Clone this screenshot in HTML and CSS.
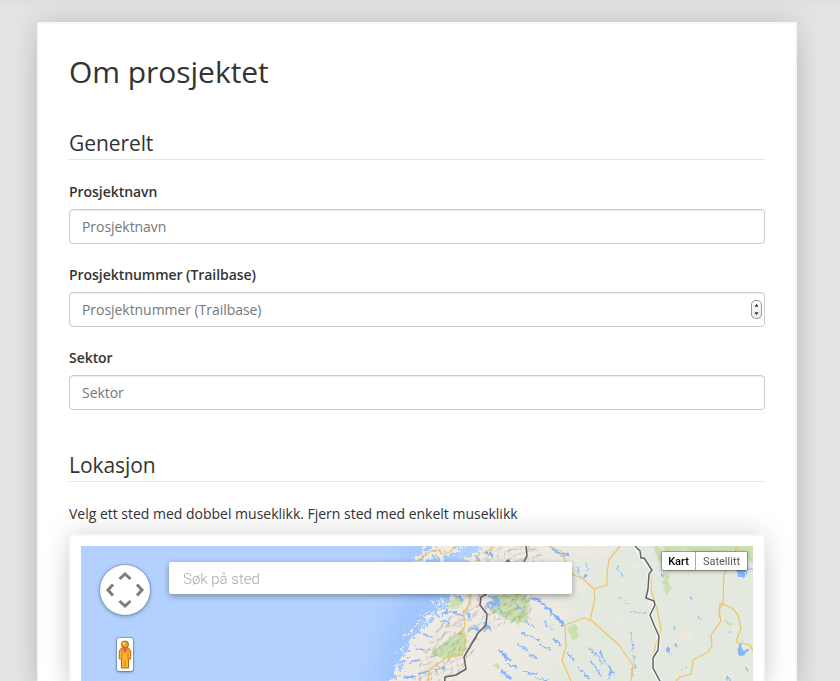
FILE: index.html
```html
<!DOCTYPE html>
<html lang="no">
<head>
<meta charset="utf-8">
<title>Om prosjektet</title>
<link rel="stylesheet" href="styles.css">
</head>
<body>
<main class="card">
  <h1>Om prosjektet</h1>
  <section>
    <h2>Generelt</h2>
    <div class="group"><label for="navn">Prosjektnavn</label><div class="field"><input id="navn" type="text" placeholder="Prosjektnavn"></div></div>
    <div class="group"><label for="nummer">Prosjektnummer (Trailbase)</label>
      <div class="field"><input id="nummer" type="text" placeholder="Prosjektnummer (Trailbase)">
        <span class="stepper"><svg width="11" height="19" viewBox="0 0 11 19"><path d="M3.5 6.7 5.5 3.7 7.5 6.7zM3.5 12.3 5.5 15.3 7.5 12.3z" fill="#333"/></svg></span>
      </div></div>
    <div class="group"><label for="sektor">Sektor</label><div class="field"><input id="sektor" type="text" placeholder="Sektor"></div></div>
  </section>
  <section class="location">
    <h2>Lokasjon</h2>
    <p>Velg ett sted med dobbel museklikk. Fjern sted med enkelt museklikk</p>
    <div class="frame">
      <div class="map">
        <svg class="terrain" width="672" height="135" viewBox="81 546 672 135">
          <defs>
            <linearGradient id="ground" gradientUnits="userSpaceOnUse" x1="490" y1="620" x2="570" y2="650"><stop offset="0" stop-color="#efebe4"/><stop offset=".5" stop-color="#ebeae2"/><stop offset="1" stop-color="#e4e9e0"/></linearGradient>
            <filter id="rough" x="-10%" y="-10%" width="120%" height="120%" color-interpolation-filters="sRGB"><feTurbulence type="fractalNoise" baseFrequency=".2" numOctaves="3" seed="4"/><feDisplacementMap in="SourceGraphic" scale="28" xChannelSelector="R" yChannelSelector="G"/></filter>
            <filter id="fine" x="-10%" y="-10%" width="120%" height="120%" color-interpolation-filters="sRGB"><feTurbulence type="fractalNoise" baseFrequency=".25" numOctaves="2" seed="9"/><feDisplacementMap in="SourceGraphic" scale="6" xChannelSelector="R" yChannelSelector="G"/></filter>
            <filter id="relief" x="0" y="0" width="100%" height="100%" color-interpolation-filters="sRGB"><feTurbulence type="fractalNoise" baseFrequency=".2" numOctaves="3" seed="7" result="n"/><feDiffuseLighting in="n" surfaceScale="2.2" diffuseConstant="1.15" lighting-color="#fffdf9" result="l"><feDistantLight azimuth="225" elevation="60"/></feDiffuseLighting><feComposite in="l" in2="SourceGraphic" operator="in"/></filter>
            <filter id="soft" filterUnits="userSpaceOnUse" x="250" y="480" width="400" height="300"><feGaussianBlur stdDeviation="14"/></filter>
          </defs>
          <path fill="#b3d1ff" d="M81 546h672v240H81z"/>
          <path d="M425 536 432 590 405 640 392 700" fill="none" stroke="#8ebafa" stroke-width="40" opacity=".55" filter="url(#soft)"/>
          <g filter="url(#rough)">
            <path fill="url(#ground)" d="M484 530 478 554 466 566 468 584 454 596 444 606 447 612 432 614 427 626 418 630 411 646 401 660 400 673 394 681 389 700H780V530z"/>
            <path fill="#efebe4" d="M411 565 421 555 432 547 450 542 464 545 451 555 436 557 420 565zM463 563 474 553 486 553 480 565z"/>
            <path fill="#efebe4" d="M404 634l5-1 2 3-4 2zM411 651l4 0-1 4-5 1zM430 602l3-1 1 4-4 1zM424 613l4 0 0 4-4 1zM400 650l4 0 1 3-4 1zM408 642l4-3 2 4-3 2zM438 604l4-1 0 3-4 1zM419 620l4-1 1 3-4 1zM397 664l4 0 0 3-4 0zM391 675l4-1 1 4-4 0z"/>
          </g>
          <g fill="#cbdfaf" filter="url(#fine)">
            <path d="M463 626 455 636 438 646 430 654 443 658 460 657 466 650 467 636zM450 602 457 598 465 600 459 607 447 609z"/>
            <path d="M492 595 525 592 530 603 527 622 518 623 504 618 490 611 493 603zM496 663 500 666 499 669 493 665z"/>
            <path d="M569 626 577 624 578 636 573 641 568 633zM653 546 662 548 661 563 655 554zM664 573 670 575 669 585 672 589 665 594 663 584zM662 544H755V565L748 560 745 550 718 551 700 555 684 549 665 552zM724 618 731 622 734 626 727 625zM684 666 688 667 686 670z"/>
          </g>
          <g class="shade" filter="url(#relief)"><path d="M490 546 480 565 470 590 458 610 440 624 426 646 414 681 455 681 487 630 532 620 532 592 546 560 535 546z"/></g>
          <g fill="#f0e9e1" filter="url(#fine)" opacity=".85"><path d="M574 555 600 560 615 546 580 548zM572 583 590 578 584 591 575 588zM535 603 559 603 577 615 563 620 537 612zM520 636 543 634 541 644 523 641zM678 632 694 630 691 639 679 639zM630 565 643 561 640 569zM611 615 624 620 617 624zM723 575 730 578 725 581z"/></g>
          <g fill="none" stroke="#85b5f8" stroke-width="1.8" filter="url(#fine)">
            <path d="M448 610 442 614 456 612 463 616M441 621 449 623M485 551 493 556M475 557 480 561M486 606 493 608M488 596 500 600 492 606M472 628 479 630 475 625M466 612 470 617M435 671 445 667M418 674 429 671M404 678 415 676M454 596 463 600M423 634 432 637M416 648 424 650M410 662 420 660"/>
            <path stroke-width="2.6" d="M550 546 560 554 569 555M532 597 540 601 549 610 558 619 564 625M484 623 491 631M499 650 505 656 511 661M501 671 511 679"/>
            <path stroke-width="1.4" d="M514 602 524 613M498 606 503 615M526 622 535 627M521 633 531 637 540 640M540 644 551 650M517 643 527 651M529 654 537 659M506 663 518 668M568 652 574 661M554 639 561 645M589 648 598 656 603 665M600 651 606 663M591 662 602 676M607 664 615 675M577 667 591 679M523 671 538 675M612 670 608 680M536 678 550 681"/>
            <path stroke-width=".9" d="M631 632 634 659 632 676M617 565 623 577M618 596 628 605M630 611 645 614M578 566 580 578M586 562 588 571M544 620 552 631M567 577 569 585"/>
          </g>
          <g fill="#85b5f8" filter="url(#fine)"><path d="M490 600 502 599 497 607 486 604zM585 573 588 576 584 579zM736 568 747 568 745 577 739 577zM667 645 671 648 670 655 666 651zM675 643 678 643 676 648zM736 650 741 642 743 650 749 648 746 655 738 656zM696 616 702 618 701 620zM661 573 664 576 661 577zM690 596 693 599 690 600zM673 626 676 627 674 629zM746 668 749 670 747 672zM727 675 731 680 725 679zM633 667 635 664 637 668zM681 668 683 671 680 671zM731 632 732 634 729 633z"/></g>
          <g fill="none" stroke="#edc46c" stroke-width="1.25" stroke-linejoin="round">
            <path d="M415 563 425 555 431 551 440 550 441 554 450 552 455 546M476 562 480 552M483 553 494 548M470 594 469 606 463 613 465 626 462 632 466 642 461 655 455 657 450 655 442 661 436 665 429 671 428 681M436 665 444 670"/>
            <path d="M548 546 561 551 566 562 573 575 582 578 594 589 607 585 607 573 609 560 620 546M594 589 595 599 590 620M565 625 584 618 592 621 603 631 618 644 633 665 631 681M565 625 566 646 562 660 571 681M651 571 651 590 657 609 661 629 655 648 653 660M737 546 733 560 724 574 723 604 719 609 721 621 711 635 712 646 708 652 693 660 691 674 680 677 676 681M719 618 720 603 732 608 738 615 741 628 736 642 750 645 754 653"/>
          </g>
          <g fill="none" stroke-linejoin="round">
            <path stroke="#fff" stroke-opacity=".65" stroke-width="4" d="M635 546 642 558 652 570 649 574 648 598 655 603 650 615 659 636 658 650 653 658 653 669 660 681"/>
            <path stroke="#636363" stroke-width="1.5" d="M526 546 527 556 524 562M506 562 508 560 510 563M487 594 481 597 480 605 487 614 486 625 478 633 464 657 466 669 456 675 445 677 444 690M635 546 640 551 641 558 644 558 652 570 649 574 648 589 646 598 654 601 655 605 650 615 654 625 659 636 658 650 653 658 653 668 660 681"/>
          </g>
          <path stroke="#85b5f8" d="M743 569H753"/>
        </svg>
        <div class="pan"><svg width="50" height="50" viewBox="0 0 50 50"><path d="m19.5 14 5.5-5 5.5 5M19.5 36l5.5 5 5.5-5M13 19.5 8 25l5 5.5M37 19.5l5 5.5-5 5.5" fill="none" stroke="#7d7d7d" stroke-width="3"/></svg></div>
        <div class="person"><svg width="16" height="33" viewBox="0 0 16 33"><path d="M4.5 10h7l2.2 3v8h-2.2v9h-7v-9H2.3v-8z" fill="#f7b62c" stroke="#b66a13"/><path d="M5 12v9M11 12v9M8 22v8" stroke="#c87819" stroke-width=".8"/><path d="m4.8 10.5 3.2 5 3.2-5z" fill="#f65b62"/><circle cx="8" cy="6.5" r="3.5" fill="#f0a02a" stroke="#a95c0a"/><circle cx="7" cy="5.5" r="1.2" fill="#ffe08a"/></svg></div>
        <input class="search" type="text" placeholder="Søk på sted">
        <div class="types"><span class="active">Kart</span><span>Satellitt</span></div>
      </div>
    </div>
  </section>
</main>
</body>
</html>
```
FILE: styles.css
```css
* { box-sizing: border-box; }
html { overflow: hidden; }
body { margin: 0; height: 681px; overflow: hidden; background: #e4e4e4; color: #333; font: 14px/20px "Open Sans", sans-serif; letter-spacing: -.03px; box-shadow: inset 0 12px 12px -10px #dcdcdc; }
.card { width: 760px; height: 659px; margin: 22px 0 0 37px; padding: 30px 30px 0; border: 2px solid #f7f7f7; border-bottom: 0; background: #fff; box-shadow: 0 0 25px rgba(0,0,0,.15), 0 25px 25px rgba(0,0,0,.06); }
h1 { margin: 0 0 39px; font-size: 30px; line-height: 36px; font-weight: 400; letter-spacing: -.04px; }
h2 { margin: 0 0 22px; height: 31px; border-bottom: 1px solid #e5e5e5; font-size: 21px; line-height: 28px; font-weight: 400; letter-spacing: -.08px; }
.group { margin-bottom: 21px; }
label { display: block; margin-bottom: 7px; font-weight: 600; letter-spacing: -.05px; }
.field { position: relative; height: 35px; }
.field input { display: block; width: 100%; height: 35px; padding: 6px 12px; border: 1px solid #ccc; border-radius: 4px; background: #fff; font: inherit; letter-spacing: -.05px; box-shadow: inset 0 1px 1px rgba(0,0,0,.075); }
.field input::placeholder { color: #777; opacity: 1; }
.stepper { position: absolute; right: 3px; top: 8px; width: 11px; height: 19px; border-radius: 5px; background: linear-gradient(#fff, #e8e8e8); box-shadow: inset 0 0 0 1px #999; }
.stepper svg { display: block; }
.location { margin-top: 41px; }
p { margin: 0 0 10px; letter-spacing: -.01px; }
.frame { height: 147px; padding: 10px 10px 0; border: 2px solid #f7f7f7; border-bottom: 0; background: #fff; box-shadow: 0 0 25px rgba(0,0,0,.17), 0 25px 25px rgba(0,0,0,.08); clip-path: inset(-30px -30px 0); }
.map { position: relative; height: 135px; overflow: hidden; }
.terrain { display: block; }
.shade { opacity: .36; mix-blend-mode: multiply; }
.pan { position: absolute; left: 19px; top: 19px; width: 50px; height: 50px; border-radius: 50%; background: #fff; box-shadow: 0 0 0 1px rgba(100,120,160,.35), 0 1px 4px rgba(40,60,100,.5); }
.person { position: absolute; left: 36px; top: 92px; width: 16px; height: 33px; border-radius: 2px; background: #fff; box-shadow: 0 0 0 1px rgba(100,120,160,.5), 0 1px 3px rgba(0,0,0,.45); }
.search { position: absolute; left: 88px; top: 16px; width: 403px; height: 32px; padding: 2px 14px 0; border: 0; border-radius: 2px; background: #fff; font: 300 15px Roboto, sans-serif; box-shadow: 0 2px 6px rgba(0,0,0,.35); }
.search::placeholder { color: #a9a9a9; opacity: 1; }
.types { position: absolute; left: 581px; top: 6px; display: flex; width: 85px; height: 18px; border-radius: 1px; background: #fff; color: #565656; font: 11px/19px Roboto, sans-serif; letter-spacing: 0; box-shadow: 0 0 0 1px rgba(0,0,0,.25), 0 1px 4px rgba(0,0,0,.4); }
.types span { flex: 1; text-align: center; }
.types .active { flex: 0 0 34px; border-right: 1px solid #aaa; color: #000; font-weight: 500; }
```
